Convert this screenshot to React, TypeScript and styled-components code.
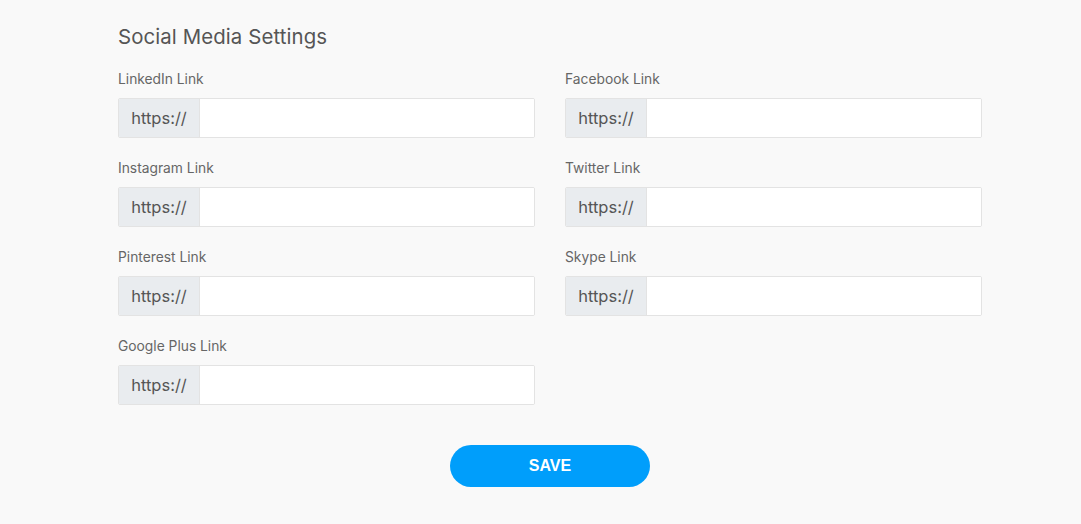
import React from "react";
import styled, { createGlobalStyle } from "styled-components";

const Global = createGlobalStyle`
  html, body { margin: 0; padding: 0; background: #f9f9f9; }
  body { font-family: Inter, "Noto Sans", sans-serif; color: #555; }
  * { box-sizing: border-box; }
`;

const Page = styled.div`
  width: 1081px;
  height: 524px;
  padding: 24px 0 0 118px;
  background: #f9f9f9;
`;

const Content = styled.div`
  width: 864px;
`;

const Title = styled.h2`
  margin: 0 0 20px 0;
  font-size: 20.4px;
  font-weight: 400;
  line-height: 26px;
  color: #555;
  letter-spacing: 0.1px;
`;

const Grid = styled.div`
  display: grid;
  grid-template-columns: 417px 417px;
  column-gap: 30px;
  row-gap: 21px;
`;

const Field = styled.div`
  display: flex;
  flex-direction: column;
`;

const Label = styled.label`
  font-size: 13.8px;
  line-height: 18px;
  color: #666;
  margin-bottom: 10px;
`;

const InputGroup = styled.div`
  display: flex;
  height: 40px;
  border: 1px solid #e3e3e3;
  border-radius: 2px;
  background: #fff;
  overflow: hidden;
`;

const Prefix = styled.span`
  width: 81px;
  flex: none;
  display: flex;
  align-items: center;
  justify-content: center;
  background: #e9ecef;
  border-right: 1px solid #e3e3e3;
  font-size: 16.5px;
  color: #555;
`;

const Input = styled.input`
  flex: 1;
  border: none;
  outline: none;
  background: #fff;
  padding: 0 12px;
  font-family: inherit;
  font-size: 15px;
`;

const Actions = styled.div`
  display: flex;
  justify-content: center;
  margin-top: 40px;
`;

const SaveButton = styled.button`
  width: 200px;
  height: 42px;
  border: none;
  border-radius: 21px;
  background: #009efb;
  color: #fff;
  font-family: "Liberation Sans", Arial, sans-serif;
  font-weight: 700;
  font-size: 16px;
  cursor: pointer;
`;

const fields = [
  "LinkedIn Link",
  "Facebook Link",
  "Instagram Link",
  "Twitter Link",
  "Pinterest Link",
  "Skype Link",
  "Google Plus Link",
];

export default function App() {
  return (
    <>
      <Global />
      <Page>
        <Content>
          <Title>Social Media Settings</Title>
          <Grid>
            {fields.map((f) => (
              <Field key={f}>
                <Label>{f}</Label>
                <InputGroup>
                  <Prefix>https://</Prefix>
                  <Input type="text" />
                </InputGroup>
              </Field>
            ))}
          </Grid>
          <Actions>
            <SaveButton>SAVE</SaveButton>
          </Actions>
        </Content>
      </Page>
    </>
  );
}
